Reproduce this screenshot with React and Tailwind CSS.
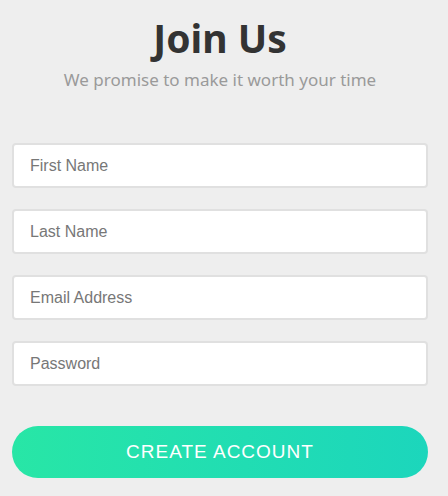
import React from 'react';

const fields = ['First Name', 'Last Name', 'Email Address', 'Password'];

const App = () => {
    return (
        <div className="w-[448px] h-[496px] bg-[#eeeeee] overflow-hidden">
            <div className="pt-[14px] pl-[12px] pr-[20px]">
                <h1 className="text-center text-[#333333] font-bold text-[39px] leading-[48px] font-['Noto_Sans',sans-serif]">
                    Join Us
                </h1>
                <p className="text-center text-[#9a9a9a] text-[17px] leading-[24px] mt-[6px] font-['Noto_Sans',sans-serif]">
                    We promise to make it worth your time
                </p>
                <form className="mt-[51px] flex flex-col gap-[21px]" onSubmit={(e) => e.preventDefault()}>
                    {fields.map((f) => (
                        <input
                            key={f}
                            type={f === 'Password' ? 'password' : 'text'}
                            placeholder={f}
                            className="h-[45px] w-full bg-white border-2 border-[#e0e0e0] rounded-[4px] px-[16px] text-[16px] font-['Liberation_Sans',Arial,sans-serif] placeholder:text-[#777777] outline-none"
                        />
                    ))}
                    <button
                        type="submit"
                        className="mt-[19px] h-[52px] w-[416px] rounded-full bg-gradient-to-r from-[#28e6a6] to-[#1cd6bc] text-white text-[19px] tracking-[1px] font-['Liberation_Sans',Arial,sans-serif]"
                    >
                        CREATE ACCOUNT
                    </button>
                </form>
            </div>
        </div>
    );
};

export default App;
